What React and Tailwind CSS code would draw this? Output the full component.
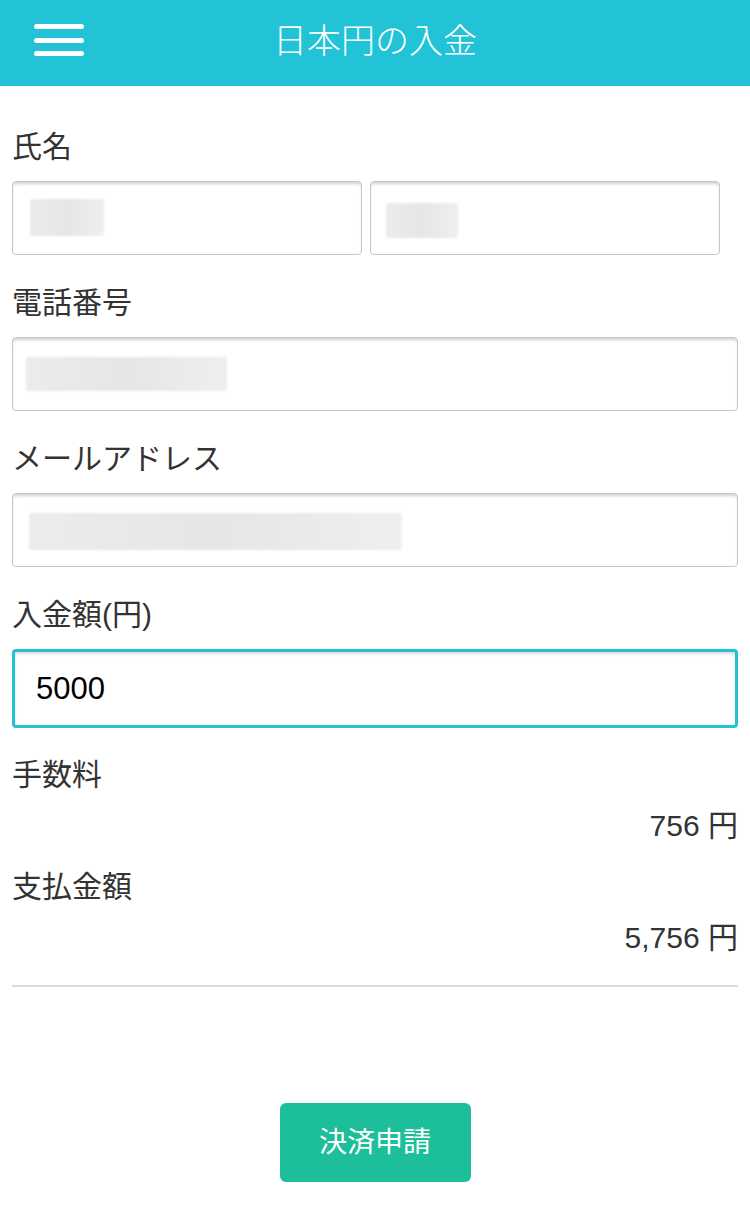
const font = { fontFamily: '"Liberation Sans", "Noto Sans CJK JP", sans-serif' };

function Blur({ className }) {
  return <div className={`rounded-[2px] bg-gradient-to-r from-[#ececec] via-[#e6e6e6] to-[#efefef] blur-[1px] ${className}`} />;
}

function Field({ children, className = "" }) {
  return (
    <div
      className={`h-[74px] rounded-[4px] border border-[#c6c6c6] bg-white shadow-[inset_0_3px_3px_-1px_rgba(0,0,0,0.18)] ${className}`}
    >
      {children}
    </div>
  );
}

function Label({ children, className = "" }) {
  return <div className={`h-9 text-[30px] leading-9 text-[#333] ${className}`}>{children}</div>;
}

export default function App() {
  return (
    <div style={font} className="min-h-[1210px] w-[750px] bg-white">
      <header className="relative flex h-[86px] items-center justify-center bg-[#22c3d6] pb-[5px]">
        <button type="button" className="absolute left-[34px] top-[24px] flex w-[50px] flex-col gap-[8.5px]">
          <span className="block h-[5px] w-full rounded-full bg-white" />
          <span className="block h-[5px] w-full rounded-full bg-white" />
          <span className="block h-[5px] w-full rounded-full bg-white" />
        </button>
        <h1 className="text-[34px] font-light leading-none text-white">日本円の入金</h1>
      </header>

      <main className="px-3">
        <Label className="mt-[43px]">氏名</Label>
        <div className="mt-4 flex gap-[8px]">
          <Field className="w-[350px] pl-[17px] pt-[17px]">
            <Blur className="h-[37px] w-[74px]" />
          </Field>
          <Field className="w-[350px] pl-[15px] pt-[21px]">
            <Blur className="h-[35px] w-[72px]" />
          </Field>
        </div>

        <Label className="mt-[30px]">電話番号</Label>
        <Field className="mt-4 pl-[13px] pt-[19px]">
          <Blur className="h-[34px] w-[201px]" />
        </Field>

        <Label className="mt-[30px]">メールアドレス</Label>
        <Field className="mt-4 pl-[16px] pt-[19px]">
          <Blur className="h-[37px] w-[373px]" />
        </Field>

        <Label className="mt-[30px]">入金額(円)</Label>
        <div className="mt-4 flex h-[79px] items-center rounded-[4px] border-[3px] border-[#22c3d6] bg-white pl-[21px] shadow-[inset_0_3px_3px_-1px_rgba(0,0,0,0.15)]">
          <span className="pt-[2px] text-[31px] text-black">5000</span>
        </div>

        <Label className="mt-[29px]">手数料</Label>
        <div className="mt-[15px] h-9 text-right text-[30px] leading-9 text-[#333]">756 円</div>

        <Label className="mt-[25px]">支払金額</Label>
        <div className="mt-[15px] h-9 text-right text-[30px] leading-9 text-[#333]">5,756 円</div>

        <hr className="mt-[29px] border-t-2 border-[#dddddd]" />

        <div className="mt-[116px] flex justify-center">
          <button
            type="button"
            className="h-[79px] w-[191px] rounded-[6px] bg-[#1cbf9a] text-[28px] text-white"
          >
            決済申請
          </button>
        </div>
      </main>
    </div>
  );
}
